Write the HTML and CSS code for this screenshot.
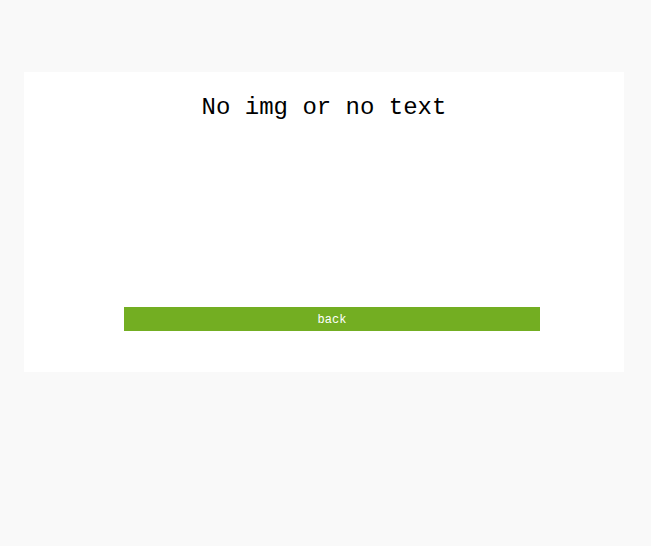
FILE: index.html
```html
<!DOCTYPE html>
<html lang="en">
<head>
<meta charset="utf-8">
<meta name="viewport" content="width=device-width, initial-scale=1">
<title>No img or no text</title>
<link rel="stylesheet" href="styles.css">
</head>
<body>
<main class="card">
<h1 class="title">No img or no text</h1>
<button class="back" type="button">back</button>
</main>
</body>
</html>
```

FILE: styles.css
```css
* {
  box-sizing: border-box;
}

body {
  margin: 0;
  padding: 72px 27px 72px 24px;
  background: #f9f9f9;
}

.card {
  display: flex;
  flex-direction: column;
  justify-content: space-between;
  max-width: 600px;
  min-height: 300px;
  margin: 0 auto;
  padding: 18px 0 41px;
  background: #fff;
}

.title {
  margin: 0;
  font: 500 24px/36px NSimSun, "Liberation Mono", monospace;
  text-align: center;
  color: #000;
}

.back {
  height: 24px;
  margin: 0 84px 0 100px;
  padding: 2px 0 0;
  border: 0;
  background: #73ae22;
  color: #fff;
  font: 12px/22px NSimSun, "Liberation Mono", monospace;
  cursor: pointer;
}
```
